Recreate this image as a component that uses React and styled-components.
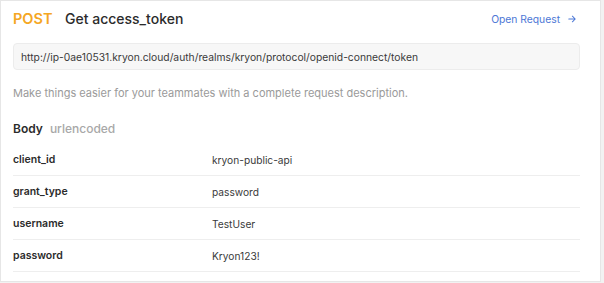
import React from "react";
import styled, { createGlobalStyle } from "styled-components";

const GlobalStyle = createGlobalStyle`
  body {
    margin: 0;
    background: #f2f2f2;
    font-family: Inter, "Noto Sans", sans-serif;
  }
`;

const Card = styled.div`
  box-sizing: border-box;
  width: 601px;
  height: 282px;
  background: #fff;
  border: 1px solid #e6e6e6;
  padding: 0 20px 0 12px;
`;

const Header = styled.div`
  display: flex;
  align-items: center;
  height: 35px;
`;

const Method = styled.span`
  color: #f5a623;
  font-size: 14.5px;
  font-weight: 600;
  width: 52px;
`;

const Title = styled.span`
  color: #2b2b2b;
  font-size: 14px;
  font-weight: 500;
  flex: 1;
`;

const OpenLink = styled.a`
  display: flex;
  align-items: center;
  gap: 8px;
  color: #4d78d6;
  font-size: 10.3px;
  text-decoration: none;
  margin-right: 4px;
`;

const UrlBox = styled.div`
  box-sizing: border-box;
  margin-top: 7px;
  height: 27px;
  display: flex;
  align-items: center;
  padding: 0 7px;
  background: #f7f7f7;
  border: 1px solid #ececec;
  border-radius: 4px;
  color: #3a3a3a;
  font-size: 10.3px;
`;

const Description = styled.div`
  margin-top: 15px;
  line-height: 16px;
  color: #9a9a9a;
  font-size: 11px;
`;

const SectionTitle = styled.div`
  margin-top: 19px;
  line-height: 18px;
  font-size: 12px;
  font-weight: 600;
  color: #2b2b2b;
  display: flex;
  gap: 7px;
`;

const SectionSub = styled.span`
  color: #a8a8a8;
  font-weight: 500;
`;

const Table = styled.div`
  margin-top: 6px;
`;

const Row = styled.div`
  display: grid;
  grid-template-columns: 199px 1fr;
  align-items: center;
  height: 32px;
  box-sizing: border-box;
  border-bottom: 1px solid #eeeeee;
`;

const Key = styled.span`
  color: #2b2b2b;
  font-size: 10.5px;
  font-weight: 600;
`;

const Value = styled.span`
  color: #3a3a3a;
  font-size: 10.2px;
`;

const params = [
  ["client_id", "kryon-public-api"],
  ["grant_type", "password"],
  ["username", "TestUser"],
  ["password", "Kryon123!"],
];

const Arrow = () => (
  <svg width="8" height="8" viewBox="0 0 10 10" fill="none" stroke="currentColor" strokeWidth="1.3" strokeLinecap="round" strokeLinejoin="round">
    <path d="M1 5h8M5.5 1.5 9 5l-3.5 3.5" />
  </svg>
);

const App = () => {
  return (
    <>
      <GlobalStyle />
      <Card>
        <Header>
          <Method>POST</Method>
          <Title>Get access_token</Title>
          <OpenLink href="#">
            Open Request <Arrow />
          </OpenLink>
        </Header>
        <UrlBox>http://ip-0ae10531.kryon.cloud/auth/realms/kryon/protocol/openid-connect/token</UrlBox>
        <Description>Make things easier for your teammates with a complete request description.</Description>
        <SectionTitle>
          Body <SectionSub>urlencoded</SectionSub>
        </SectionTitle>
        <Table>
          {params.map(([k, v]) => (
            <Row key={k}>
              <Key>{k}</Key>
              <Value>{v}</Value>
            </Row>
          ))}
        </Table>
      </Card>
    </>
  );
};

export default App;
